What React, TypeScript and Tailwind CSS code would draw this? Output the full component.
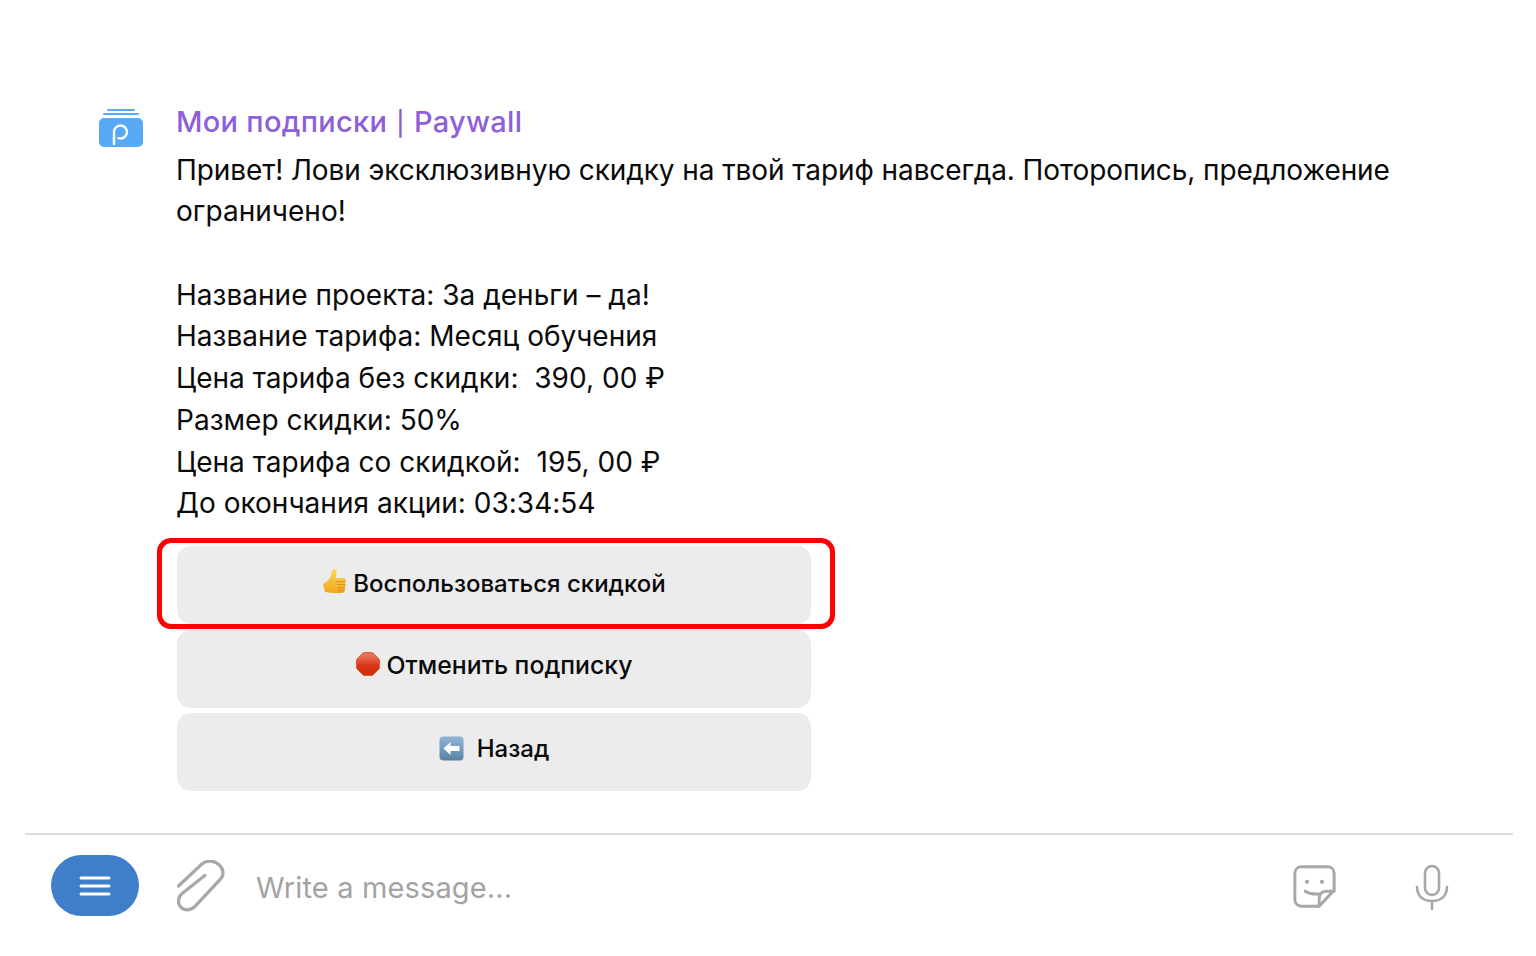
const LINES = [
  'Привет! Лови эксклюзивную скидку на твой тариф навсегда. Поторопись, предложение',
  'ограничено!',
  '',
  'Название проекта: За деньги – да!',
  'Название тарифа: Месяц обучения',
  'Цена тарифа без скидки:  390, 00 ₽',
  'Размер скидки: 50%',
  'Цена тарифа со скидкой:  195, 00 ₽',
  'До окончания акции: 03:34:54',
]

function ThumbEmoji() {
  return (
    <svg width="24" height="24" viewBox="0 0 24 24" className="-mt-[6px] shrink-0">
      <defs>
        <linearGradient id="thumb" x1="0" y1="0" x2="0" y2="1">
          <stop offset="0" stopColor="#fdd75a" />
          <stop offset="1" stopColor="#f2a51e" />
        </linearGradient>
      </defs>
      <path d="M1 15C3 13.500 6 12 7.500 9.500 9 7 9.500 3 10.500 1 11.500-.3 14 .2 14.500 2 15 4.500 14 7 13.500 9H21C23.500 9 24 11 24 12 24 13.500 23.500 14.500 23 15 23.800 16 23.800 17.500 23 18.500 23.500 19.500 23.200 21 22.500 21.500 22.700 23 21.500 24 20 24H11C8 24 6 23 3 23Z" fill="url(#thumb)" />
      <path d="M15 12.500h8M15.500 15.500h7.500M16 18.800h6.500M16.500 21.500h5.500" stroke="#d08a1c" strokeWidth="0.8" strokeLinecap="round" fill="none" />
    </svg>
  )
}

function StopEmoji() {
  return (
    <svg width="24" height="24" viewBox="0 0 24 24" className="-mt-[3px] shrink-0">
      <defs>
        <linearGradient id="stop" x1="0" y1="0" x2="0" y2="1">
          <stop offset="0" stopColor="#f0806c" />
          <stop offset="0.55" stopColor="#d93a1a" />
          <stop offset="1" stopColor="#cf2a00" />
        </linearGradient>
      </defs>
      <path d="M7.500.7h9l6.800 6.800v9l-6.800 6.800h-9L.7 16.500v-9z" fill="url(#stop)" stroke="#e2461f" strokeWidth="1" />
    </svg>
  )
}

function BackEmoji() {
  return (
    <svg width="25" height="25" viewBox="0 0 25 25" className="-mt-[2px] shrink-0">
      <defs>
        <linearGradient id="back" x1="0" y1="0" x2="0" y2="1">
          <stop offset="0" stopColor="#8fb5d6" />
          <stop offset="1" stopColor="#5b81a6" />
        </linearGradient>
      </defs>
      <rect x="0.500" y="0.500" width="24" height="24" rx="4" fill="url(#back)" />
      <path d="M4.500 12.500l7-6.500v4h9v5h-9v4z" fill="#fff" />
    </svg>
  )
}

function KeyboardButton({ icon, label, inner }: { icon: React.ReactNode; label: string; inner: string }) {
  return (
    <button className="flex h-[78px] w-full items-center justify-center rounded-[14px] bg-[#ececec] font-medium text-[#0a0a0a]">
      <span className={`flex items-center ${inner}`}>
        {icon}
        {label}
      </span>
    </button>
  )
}

export default function App() {
  return (
    <div className="flex h-[956px] w-[1536px] flex-col overflow-hidden bg-white font-['Inter','Liberation_Sans',sans-serif] text-[#0a0a0a]">
      <div className="flex h-[833px] gap-[34px] pl-[99px] pt-[101px]">
        <svg width="44" height="46" viewBox="0 0 44 46" className="mt-[8px] shrink-0">
          <rect x="8" y="0" width="28" height="2" rx="1" fill="#58a9f5" />
          <rect x="4" y="4" width="36" height="2" rx="1" fill="#58a9f5" />
          <rect x="0" y="9" width="44" height="29" rx="5" fill="#58a9f5" />
          <path d="M15 35V23a6.500 6.500 0 1 1 4.500 6.200" fill="none" stroke="#fff" strokeWidth="2.400" strokeLinecap="round" />
        </svg>
        <div className="w-[1240px]">
          <div className="-ml-[1px] text-[29px] leading-[42px] font-medium tracking-[0.3px] text-[#8e5fd8]">
            Мои подписки <span className="mx-[1px] text-[24px] leading-none">|</span> Paywall
          </div>
          <div className="mt-[6.700px] -ml-[1px] text-[28px] leading-[41.7px] whitespace-pre-wrap">
            {LINES.map((line, i) => (
              <p key={i} className={i === 0 ? 'min-h-[41.7px] tracking-[-0.08px]' : 'min-h-[41.7px] tracking-[0.02px]'}>{line}</p>
            ))}
          </div>
          <div className="mt-[21.300px] flex w-[634px] flex-col">
            <div className="relative">
              <KeyboardButton icon={<ThumbEmoji />} label="Воспользоваться скидкой" inner="-mt-[2px] gap-[7px] text-[24px]" />
              <div className="pointer-events-none absolute -top-[8px] -right-[24px] -bottom-[5px] -left-[20px] rounded-[14px] border-[5px] border-[#fe0000]" />
            </div>
            <div className="mt-[6px]">
              <KeyboardButton icon={<StopEmoji />} label="Отменить подписку" inner="-mt-[8px] gap-[7px] text-[24.800px]" />
            </div>
            <div className="mt-[5px]">
              <KeyboardButton icon={<BackEmoji />} label="Назад" inner="-mt-[6px] gap-[13px] text-[24px]" />
            </div>
          </div>
        </div>
      </div>

      <div className="ml-[25px] mr-[23px] flex h-[100px] items-start border-t-2 border-[#dcdcdc] pl-[26px] pr-[64px] pt-[20px]">
        <button className="flex h-[61px] w-[88px] shrink-0 items-center justify-center rounded-full bg-[#3f7ec8]">
          <svg width="32" height="24" viewBox="0 0 32 24" fill="none" stroke="#fff" strokeWidth="3" strokeLinecap="round">
            <path d="M2 4h28M2 12h28M2 20h28" />
          </svg>
        </button>
        <svg width="48" height="54" viewBox="0 0 50 56" fill="none" stroke="#a8a8a8" strokeWidth="3.400" strokeLinecap="round" strokeLinejoin="round" className="ml-[38px] mt-[5px] shrink-0">
          <path d="M1.500 27L26 4C31 0 39 0 44 5 49 10 49 16 45 20L19 48C14 53 8 53 4 49 0 45 1 39 5 35L29 16" />
        </svg>
        <div className="ml-[31px] mt-[13px] flex-1 text-[29px] leading-[40px] tracking-[0.15px] text-[#a3a3a3]">Write a message...</div>
        <svg width="43" height="43" viewBox="0 0 46 46" fill="none" stroke="#a8a8a8" strokeWidth="3.200" strokeLinecap="round" strokeLinejoin="round" className="mt-[10px] ml-[2px] shrink-0">
          <path d="M28 44H9c-4 0-7-3-7-7V9c0-4 3-7 7-7h28c4 0 7 3 7 7v18L28 44z" />
          <path d="M28 44v-8c0-5 3-8 8-8h8" />
          <path d="M13 28c4 2.500 9 3.500 15 3" />
          <circle cx="15" cy="18" r="2.300" fill="#a8a8a8" stroke="none" />
          <circle cx="31" cy="18" r="2.300" fill="#a8a8a8" stroke="none" />
        </svg>
        <svg width="34" height="46" viewBox="0 0 34 46" fill="none" stroke="#a8a8a8" strokeWidth="2.600" strokeLinecap="round" className="ml-[79px] mt-[9px] shrink-0">
          <rect x="10" y="2" width="14" height="29" rx="7" />
          <path d="M2 23c0 9 6 14 15 14s15-5 15-14M17 37v8" />
        </svg>
      </div>
    </div>
  )
}
